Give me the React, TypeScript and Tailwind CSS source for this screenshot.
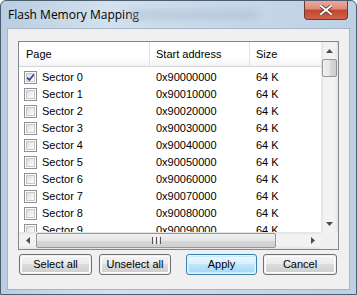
import React from 'react';

const sectors = Array.from({ length: 10 }, (_, i) => ({
  name: `Sector ${i}`,
  address: `0x900${i}0000`,
  size: '64 K',
  checked: i === 0,
}));

const Checkbox: React.FC<{ checked: boolean }> = ({ checked }) => (
  <div className="w-[13px] h-[13px] border border-[#8e8f8f] bg-white p-[1px] flex-none">
    <div className="relative w-full h-full border border-[#c7c7c7] bg-gradient-to-br from-[#dcdcdc] via-[#efefef] to-[#fbfbfb]">
      {checked && (
        <svg viewBox="0 0 9 9" className="absolute -left-[1px] -top-[1px] w-[9px] h-[9px]">
          <path d="M1.2 4.6 L3.4 7 L7.8 1.4" fill="none" stroke="#26408d" strokeWidth="1.6" />
        </svg>
      )}
    </div>
  </div>
);

const Button: React.FC<{ label: string; primary?: boolean; className?: string }> = ({ label, primary, className }) => (
  <button
    className={`h-[21px] rounded-[3px] border text-[11px] text-black p-[1px] ${
      primary ? 'border-[#3c7fb1]' : 'border-[#707070]'
    } ${className ?? ''}`}
  >
    <div
      className={`h-full w-full rounded-[2px] flex items-center justify-center ${
        primary
          ? 'bg-[linear-gradient(#eaf6fd_0%,#d9f0fc_45%,#bee6fd_50%,#a7d9f5_100%)] border border-[#c9ecfd]'
          : 'bg-[linear-gradient(#f2f2f2_0%,#ebebeb_45%,#dddddd_50%,#cfcfcf_100%)] border border-[#fcfcfc]'
      }`}
    >
      {label}
    </div>
  </button>
);

const Arrow: React.FC<{ dir: 'up' | 'down' | 'left' | 'right' }> = ({ dir }) => {
  const pts = {
    up: '0,4 3.5,0 7,4',
    down: '0,0 3.5,4 7,0',
    left: '4,0 0,3.5 4,7',
    right: '0,0 4,3.5 0,7',
  }[dir];
  const vertical = dir === 'up' || dir === 'down';
  return (
    <svg width={vertical ? 7 : 4} height={vertical ? 4 : 7} viewBox={vertical ? '0 0 7 4' : '0 0 4 7'}>
      <polygon points={pts} fill="#4d4d4d" />
    </svg>
  );
};

export default function App() {
  return (
    <div
      className="w-[357px] h-[295px] overflow-hidden bg-[linear-gradient(90deg,#b9cde2_0%,#d3e1ee_30%,#c9d9e9_60%,#bdd0e4_100%)] border border-[#4d5d70] rounded-t-[6px] flex flex-col"
      style={{ fontFamily: '"Liberation Sans", Arial, sans-serif' }}
    >
      {/* Title bar */}
      <div className="h-[27px] flex-none flex items-start relative">
        <span className="ml-[7px] mt-[5px] text-[12px] text-black" style={{ fontFamily: '"Open Sans", "Liberation Sans", sans-serif' }}>
          Flash Memory Mapping
        </span>
        <div className="absolute left-[128px] top-[9px] w-[130px] h-[10px] rounded-full bg-[#a9bdd3] opacity-50 blur-[3px]" />
        <div className="absolute right-[8px] top-0 w-[44px] h-[19px] rounded-b-[4px] border border-t-0 border-[#6e3a33] bg-[linear-gradient(#e9a99b_0%,#dc8a78_45%,#c5442f_50%,#d0624a_100%)] flex items-center justify-center">
          <svg width="12" height="10" viewBox="0 0 12 10">
            <path d="M1 1 L11 9 M11 1 L1 9" stroke="#4a2520" strokeWidth="3.4" strokeLinecap="square" />
            <path d="M1 1 L11 9 M11 1 L1 9" stroke="#ffffff" strokeWidth="2" strokeLinecap="square" />
          </svg>
        </div>
      </div>

      {/* Client area */}
      <div className="mx-[6px] h-[262px] flex-none bg-[#f0f0f0] border border-[#a4b5c8] px-[10px] pt-[12px] flex flex-col">
        {/* List view */}
        <div className="w-[321px] h-[209px] border border-[#828790] bg-white flex flex-col text-[11px] text-black">
          <div className="flex flex-1 min-h-0">
            <div className="flex-1 flex flex-col min-w-0 overflow-hidden">
              <div className="h-[25px] flex-none flex border-b border-[#d5d5d5] bg-[linear-gradient(#ffffff_0%,#ffffff_60%,#f3f4f6_100%)]">
                <div className="w-[131px] flex-none pl-[7px] flex items-center border-r border-[#dde2e8]">Page</div>
                <div className="w-[100px] flex-none pl-[6px] flex items-center border-r border-[#dde2e8]">Start address</div>
                <div className="flex-1 pl-[6px] flex items-center">Size</div>
              </div>
              <div className="flex-1 overflow-hidden pt-[2px]">
                {sectors.map((s) => (
                  <div key={s.name} className="h-[17px] flex items-center">
                    <div className="w-[131px] flex-none pl-[5px] flex items-center gap-[5px]">
                      <Checkbox checked={s.checked} />
                      <span>{s.name}</span>
                    </div>
                    <div className="w-[100px] flex-none pl-[6px]">{s.address}</div>
                    <div className="flex-1 pl-[6px]">{s.size}</div>
                  </div>
                ))}
              </div>
            </div>
            {/* Vertical scrollbar */}
            <div className="w-[17px] flex-none flex flex-col bg-[linear-gradient(90deg,#e3e3e3,#f2f2f2_20%,#f2f2f2_80%,#e3e3e3)]">
              <div className="h-[17px] flex items-center justify-center"><Arrow dir="up" /></div>
              <div className="mx-[1px] h-[18px] rounded-[2px] border border-[#979797] bg-[linear-gradient(90deg,#f1f1f1,#e5e5e5_50%,#d7d7d7_51%,#cfcfcf)]" />
              <div className="flex-1" />
              <div className="h-[17px] flex items-center justify-center"><Arrow dir="down" /></div>
            </div>
          </div>
          {/* Horizontal scrollbar */}
          <div className="h-[17px] flex-none flex">
            <div className="flex-1 flex items-stretch bg-[linear-gradient(#e3e3e3,#f2f2f2_20%,#f2f2f2_80%,#e3e3e3)]">
              <div className="w-[17px] flex items-center justify-center"><Arrow dir="left" /></div>
              <div className="my-[1px] w-[240px] rounded-[2px] border border-[#979797] bg-[linear-gradient(#f1f1f1,#e5e5e5_50%,#d7d7d7_51%,#cfcfcf)] flex items-center justify-center">
                <div className="flex gap-[1px]">
                  <div className="w-[1px] h-[7px] bg-[#555]" />
                  <div className="w-[1px] h-[7px] bg-[#fff]" />
                  <div className="w-[1px] h-[7px] bg-[#555]" />
                  <div className="w-[1px] h-[7px] bg-[#fff]" />
                  <div className="w-[1px] h-[7px] bg-[#555]" />
                </div>
              </div>
              <div className="flex-1" />
              <div className="w-[17px] flex items-center justify-center"><Arrow dir="right" /></div>
            </div>
            <div className="w-[17px] flex-none bg-[#f0f0f0]" />
          </div>
        </div>

        {/* Buttons */}
        <div className="flex mt-[4px] ml-[1px]">
          <Button label="Select all" className="w-[73px]" />
          <Button label="Unselect all" className="w-[72px] ml-[7px]" />
          <Button label="Apply" primary className="w-[71px] ml-[15px]" />
          <Button label="Cancel" className="w-[74px] ml-[6px]" />
        </div>
      </div>
      <div className="flex-1" />
    </div>
  );
}
